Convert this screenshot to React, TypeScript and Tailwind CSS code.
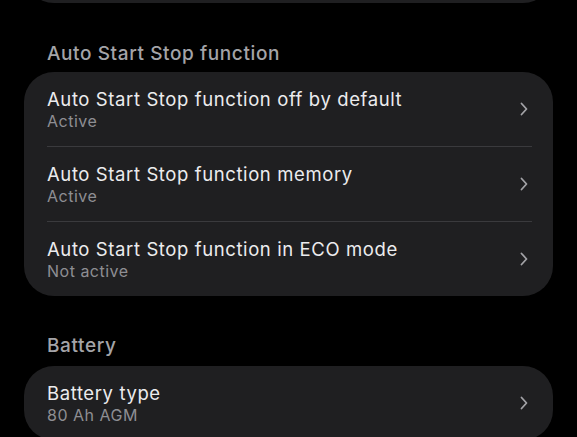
import React from "react";

const Chevron = () => (
  <svg width="10" height="16" viewBox="0 0 10 16" fill="none" className="shrink-0">
    <path d="M2.5 2.5 L7.5 8 L2.5 13.5" stroke="#a2a2a6" strokeWidth="1.8" strokeLinecap="round" strokeLinejoin="round" />
  </svg>
);

type RowProps = { title: string; sub: string };

const Row = ({ title, sub }: RowProps) => (
  <div className="flex items-center h-[74px] pl-[23px] pr-[24px]">
    <div className="flex-1 flex flex-col">
      <div className="text-[18.5px] leading-[24px] tracking-[0.6px] text-[#ececee]">{title}</div>
      <div className="text-[16px] leading-[20px] tracking-[0.5px] text-[#8e8e93]">{sub}</div>
    </div>
    <Chevron />
  </div>
);

const Divider = () => <div className="h-px bg-[#3a3a3d] ml-[23px] mr-[21px]" />;

export default function App() {
  return (
    <div
      className="w-[577px] h-[437px] bg-black overflow-hidden px-[24px]"
      style={{ fontFamily: "Inter, 'Noto Sans', sans-serif" }}
    >
      <div className="h-[64px] -mt-[61px] rounded-[30px] bg-[#1f1f21]" />
      <div className="mt-[40px] pl-[23px] text-[19px] leading-[22px] font-medium tracking-[0.6px] text-[#a4a4a8]">
        Auto Start Stop function
      </div>
      <div className="mt-[7px] rounded-[30px] bg-[#1f1f21] overflow-hidden">
        <Row title="Auto Start Stop function off by default" sub="Active" />
        <Divider />
        <Row title="Auto Start Stop function memory" sub="Active" />
        <Divider />
        <Row title="Auto Start Stop function in ECO mode" sub="Not active" />
      </div>
      <div className="mt-[39px] pl-[23px] text-[19px] leading-[22px] font-medium tracking-[0.6px] text-[#a4a4a8]">
        Battery
      </div>
      <div className="mt-[9px] rounded-[30px] bg-[#1f1f21] overflow-hidden">
        <Row title="Battery type" sub="80 Ah AGM" />
      </div>
    </div>
  );
}
